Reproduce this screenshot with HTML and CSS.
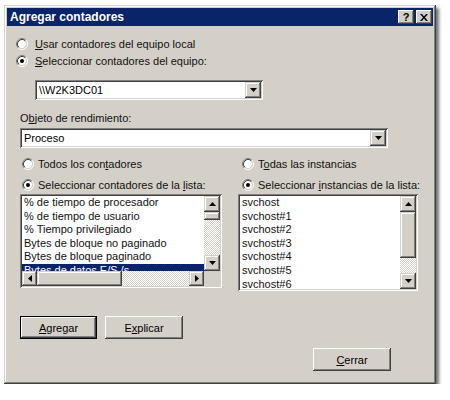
FILE: index.html
```html
<!DOCTYPE html>
<html lang="es">
<head>
<meta charset="utf-8">
<title>Agregar contadores</title>
<link rel="stylesheet" href="styles.css">
</head>
<body>
<div class="window">
  <div class="titlebar">
    <span class="title">Agregar contadores</span>
    <div class="tbtns">
      <span class="tbtn">?</span>
      <span class="tbtn"><svg width="8" height="7" viewBox="0 0 8 7"><path d="M0 0h2l2 2.4 2-2.4h2L5 3.5 8 7H6L4 4.6 2 7H0l3-3.5z" fill="#000"/></svg></span>
    </div>
  </div>
  <div class="content">
    <label class="radio top r1">
      <svg class="rb" width="12" height="12" viewBox="0 0 12 12"><circle cx="6" cy="6" r="4.2" fill="#fff"/><path d="M2.11 9.89A5.5 5.5 0 0 1 9.89 2.11" stroke="#808080" fill="none"/><path d="M9.89 2.11A5.5 5.5 0 0 1 2.11 9.89" stroke="#fff" fill="none"/><path d="M2.82 9.18A4.5 4.5 0 0 1 9.18 2.82" stroke="#404040" fill="none"/><path d="M9.18 2.82A4.5 4.5 0 0 1 2.82 9.18" stroke="#d4d0c8" fill="none"/></svg>
      <span><u>U</u>sar contadores del equipo local</span>
    </label>
    <label class="radio top r2">
      <svg class="rb" width="12" height="12" viewBox="0 0 12 12"><circle cx="6" cy="6" r="4.2" fill="#fff"/><path d="M2.11 9.89A5.5 5.5 0 0 1 9.89 2.11" stroke="#808080" fill="none"/><path d="M9.89 2.11A5.5 5.5 0 0 1 2.11 9.89" stroke="#fff" fill="none"/><path d="M2.82 9.18A4.5 4.5 0 0 1 9.18 2.82" stroke="#404040" fill="none"/><path d="M9.18 2.82A4.5 4.5 0 0 1 2.82 9.18" stroke="#d4d0c8" fill="none"/><circle cx="6" cy="6" r="2" fill="#000"/></svg>
      <span><u>S</u>eleccionar contadores del equipo:</span>
    </label>
    <div class="combo machine">
      <span class="combo-text">\\W2K3DC01</span>
      <span class="dd"><svg width="7" height="4" viewBox="0 0 7 4"><path d="M0 0H7L3.5 4z" fill="#000"/></svg></span>
    </div>
    <div class="lbl">O<u>b</u>jeto de rendimiento:</div>
    <div class="combo object">
      <span class="combo-text">Proceso</span>
      <span class="dd"><svg width="7" height="4" viewBox="0 0 7 4"><path d="M0 0H7L3.5 4z" fill="#000"/></svg></span>
    </div>
    <div class="cols">
      <div class="col col-left">
        <label class="radio r3">
          <svg class="rb" width="12" height="12" viewBox="0 0 12 12"><circle cx="6" cy="6" r="4.2" fill="#fff"/><path d="M2.11 9.89A5.5 5.5 0 0 1 9.89 2.11" stroke="#808080" fill="none"/><path d="M9.89 2.11A5.5 5.5 0 0 1 2.11 9.89" stroke="#fff" fill="none"/><path d="M2.82 9.18A4.5 4.5 0 0 1 9.18 2.82" stroke="#404040" fill="none"/><path d="M9.18 2.82A4.5 4.5 0 0 1 2.82 9.18" stroke="#d4d0c8" fill="none"/></svg>
          <span>Todos los con<u>t</u>adores</span>
        </label>
        <label class="radio r4">
          <svg class="rb" width="12" height="12" viewBox="0 0 12 12"><circle cx="6" cy="6" r="4.2" fill="#fff"/><path d="M2.11 9.89A5.5 5.5 0 0 1 9.89 2.11" stroke="#808080" fill="none"/><path d="M9.89 2.11A5.5 5.5 0 0 1 2.11 9.89" stroke="#fff" fill="none"/><path d="M2.82 9.18A4.5 4.5 0 0 1 9.18 2.82" stroke="#404040" fill="none"/><path d="M9.18 2.82A4.5 4.5 0 0 1 2.82 9.18" stroke="#d4d0c8" fill="none"/><circle cx="6" cy="6" r="2" fill="#000"/></svg>
          <span>Seleccionar contadores de la <u>l</u>ista:</span>
        </label>
        <div class="list list-left">
          <div class="lgrid">
            <div class="items">
              <div class="item">% de tiempo de procesador</div>
              <div class="item">% de tiempo de usuario</div>
              <div class="item">% Tiempo privilegiado</div>
              <div class="item">Bytes de bloque no paginado</div>
              <div class="item">Bytes de bloque paginado</div>
              <div class="item sel">Bytes de datos E/S /s</div>
            </div>
            <div class="vscroll">
              <span class="sbtn"><svg width="7" height="4" viewBox="0 0 7 4"><path d="M3.5 0L7 4H0z" fill="#000"/></svg></span>
              <span class="thumb thumb-small"></span>
              <span class="spacer"></span>
              <span class="sbtn"><svg width="7" height="4" viewBox="0 0 7 4"><path d="M0 0H7L3.5 4z" fill="#000"/></svg></span>
            </div>
            <div class="hscroll">
              <span class="sbtn h"><svg width="4" height="7" viewBox="0 0 4 7"><path d="M4 0V7L0 3.5z" fill="#000"/></svg></span>
              <span class="thumb thumb-h"></span>
              <span class="spacer"></span>
              <span class="sbtn h"><svg width="4" height="7" viewBox="0 0 4 7"><path d="M0 0V7L4 3.5z" fill="#000"/></svg></span>
            </div>
            <div class="corner"></div>
          </div>
        </div>
      </div>
      <div class="col col-right">
        <label class="radio r3">
          <svg class="rb" width="12" height="12" viewBox="0 0 12 12"><circle cx="6" cy="6" r="4.2" fill="#fff"/><path d="M2.11 9.89A5.5 5.5 0 0 1 9.89 2.11" stroke="#808080" fill="none"/><path d="M9.89 2.11A5.5 5.5 0 0 1 2.11 9.89" stroke="#fff" fill="none"/><path d="M2.82 9.18A4.5 4.5 0 0 1 9.18 2.82" stroke="#404040" fill="none"/><path d="M9.18 2.82A4.5 4.5 0 0 1 2.82 9.18" stroke="#d4d0c8" fill="none"/></svg>
          <span>T<u>o</u>das las instancias</span>
        </label>
        <label class="radio r4">
          <svg class="rb" width="12" height="12" viewBox="0 0 12 12"><circle cx="6" cy="6" r="4.2" fill="#fff"/><path d="M2.11 9.89A5.5 5.5 0 0 1 9.89 2.11" stroke="#808080" fill="none"/><path d="M9.89 2.11A5.5 5.5 0 0 1 2.11 9.89" stroke="#fff" fill="none"/><path d="M2.82 9.18A4.5 4.5 0 0 1 9.18 2.82" stroke="#404040" fill="none"/><path d="M9.18 2.82A4.5 4.5 0 0 1 2.82 9.18" stroke="#d4d0c8" fill="none"/><circle cx="6" cy="6" r="2" fill="#000"/></svg>
          <span>Seleccionar <u>i</u>nstancias de la lista:</span>
        </label>
        <div class="list list-right">
          <div class="rgrid">
            <div class="items">
              <div class="item">svchost</div>
              <div class="item">svchost#1</div>
              <div class="item">svchost#2</div>
              <div class="item">svchost#3</div>
              <div class="item">svchost#4</div>
              <div class="item">svchost#5</div>
              <div class="item">svchost#6</div>
            </div>
            <div class="vscroll">
              <span class="sbtn"><svg width="7" height="4" viewBox="0 0 7 4"><path d="M3.5 0L7 4H0z" fill="#000"/></svg></span>
              <span class="thumb thumb-big"></span>
              <span class="spacer"></span>
              <span class="sbtn"><svg width="7" height="4" viewBox="0 0 7 4"><path d="M0 0H7L3.5 4z" fill="#000"/></svg></span>
            </div>
          </div>
        </div>
      </div>
    </div>
    <div class="btnrow">
      <button class="btn default btn-add" type="button"><u>A</u>gregar</button>
      <button class="btn" type="button">E<u>x</u>plicar</button>
    </div>
    <div class="closerow">
      <button class="btn" type="button"><u>C</u>errar</button>
    </div>
  </div>
</div>
</body>
</html>
```
FILE: styles.css
```css
* { box-sizing: border-box; }
html, body { margin: 0; padding: 0; background: #fff; }
body {
  font-family: "Liberation Sans", Arial, sans-serif;
  font-size: 11px;
  color: #111;
}
u { text-decoration: underline; text-underline-offset: 1px; }

.window {
  margin: 5px 0 0 4px;
  width: 432px;
  height: 379px;
  padding: 3px;
  background: #d4d0c8;
  display: flex;
  flex-direction: column;
  box-shadow: inset -1px -1px #404040, inset 1px 1px #d4d0c8,
              inset -2px -2px #808080, inset 2px 2px #fff,
              3px 3px 3px rgba(0, 0, 0, 0.55);
}

.titlebar {
  height: 18px;
  flex: none;
  background: #0a246a;
  display: flex;
  align-items: center;
  justify-content: space-between;
  padding: 0 1px 0 3px;
}
.title { color: #fff; font-weight: bold; font-size: 12px; }
.tbtns { display: flex; gap: 2px; }
.tbtn {
  width: 16px;
  height: 14px;
  background: #d4d0c8;
  display: flex;
  align-items: center;
  justify-content: center;
  font-weight: bold;
  font-size: 11px;
  color: #000;
  box-shadow: inset -1px -1px #404040, inset 1px 1px #fff, inset -2px -2px #808080;
}

.content {
  flex: 1;
  display: flex;
  flex-direction: column;
  align-items: flex-start;
  padding-left: 9px;
}

.radio {
  display: flex;
  align-items: center;
  height: 13px;
  gap: 4px;
  white-space: nowrap;
}
.radio .rb { flex: none; }
.radio.top { gap: 7px; }
.r1 { margin-top: 11px; }
.r2 { margin-top: 4px; }
.r4 { margin-top: 8px; }

.combo {
  display: flex;
  height: 20px;
  padding: 2px;
  background: #fff;
  box-shadow: inset 1px 1px #808080, inset -1px -1px #fff,
              inset 2px 2px #404040, inset -2px -2px #d4d0c8;
}
.combo-text { flex: 1; line-height: 16px; padding-left: 2px; color: #000; }
.dd {
  width: 16px;
  height: 16px;
  flex: none;
  background: #d4d0c8;
  display: flex;
  align-items: center;
  justify-content: center;
  box-shadow: inset -1px -1px #404040, inset 1px 1px #d4d0c8,
              inset -2px -2px #808080, inset 2px 2px #fff;
}
.machine { width: 228px; margin-left: 19px; margin-top: 13px; }
.lbl { margin-top: 12px; margin-left: 4px; height: 13px; line-height: 13px; }
.object { width: 368px; margin-left: 4px; margin-top: 3px; }

.cols { display: flex; gap: 16px; margin-left: 4px; margin-top: 9px; }
.col { display: flex; flex-direction: column; }
.col-left { width: 202px; }
.col-right { width: 180px; }
.col-left .radio { margin-left: 2px; }
.col-right .radio { margin-left: 4px; }

.list {
  margin-top: 3px;
  padding: 2px;
  background: #fff;
  box-shadow: inset 1px 1px #808080, inset -1px -1px #fff,
              inset 2px 2px #404040, inset -2px -2px #d4d0c8;
}
.list-left { width: 202px; height: 94px; }
.list-right { width: 180px; height: 97px; }
.lgrid {
  display: grid;
  grid-template-columns: 1fr 16px;
  grid-template-rows: 1fr 15px;
  height: 100%;
}
.rgrid {
  display: grid;
  grid-template-columns: 1fr 16px;
  height: 100%;
}
.items { overflow: hidden; background: #fff; min-width: 0; }
.item {
  height: 13.6px;
  line-height: 13.6px;
  padding-left: 2px;
  white-space: nowrap;
  color: #111;
}
.item.sel { background: #0a246a; color: #fff; }

.vscroll, .hscroll {
  display: flex;
  background-color: #fff;
  background-image: repeating-conic-gradient(#d4d0c8 0 25%, #fff 0 50%);
  background-size: 2px 2px;
  min-height: 0;
  overflow: hidden;
}
.vscroll { flex-direction: column; }
.sbtn, .thumb {
  flex: none;
  background: #d4d0c8;
  box-shadow: inset -1px -1px #404040, inset 1px 1px #d4d0c8,
              inset -2px -2px #808080, inset 2px 2px #fff;
}
.sbtn {
  width: 16px;
  height: 16px;
  display: flex;
  align-items: center;
  justify-content: center;
}
.sbtn.h { width: 15px; height: 15px; }
.spacer { flex: 1; }
.thumb-small { height: 8px; }
.thumb-big { height: 46px; }
.thumb-h { width: 85px; }
.corner { background: #d4d0c8; }

.btnrow { display: flex; gap: 8px; margin-left: 4px; margin-top: 25px; }
.closerow { margin-left: 297px; margin-top: 9px; }
.btn {
  width: 78px;
  height: 23px;
  padding: 0;
  border: 0;
  font: inherit;
  color: #000;
  background: #d4d0c8;
  display: flex;
  align-items: center;
  justify-content: center;
  box-shadow: inset -1px -1px #404040, inset 1px 1px #fff,
              inset -2px -2px #808080;
}
.btn-add { width: 77px; }
.btn.default {
  box-shadow: inset 0 0 0 1px #000, inset -2px -2px #404040,
              inset 2px 2px #fff, inset -3px -3px #808080;
}
```
